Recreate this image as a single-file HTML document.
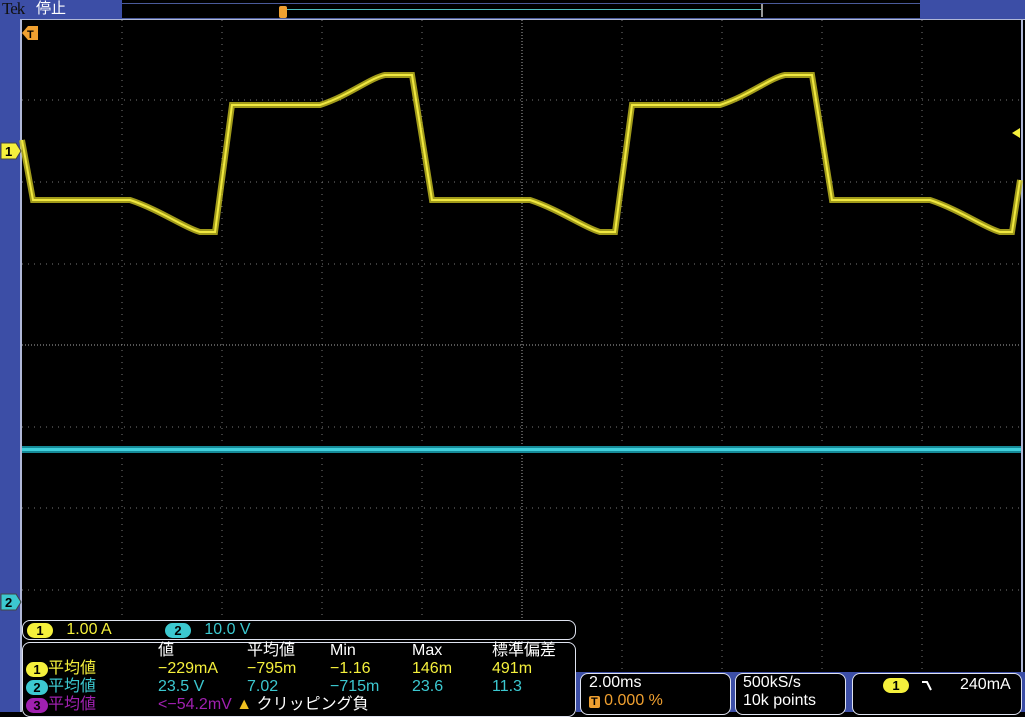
<!DOCTYPE html>
<html><head><meta charset="utf-8"><style>
body{margin:0;width:1025px;height:712px;background:#000;overflow:hidden;position:relative;font-family:"Liberation Sans","Noto Sans CJK JP",sans-serif}
.a{position:absolute}
.box{position:absolute;border:1.5px solid #dfe3f0;border-radius:8px;background:#000;box-sizing:border-box}
.y{color:#f5f03c}.c{color:#3cc8d0}.m{color:#a020b0}.w{color:#fff}
.pill{display:inline-block;border-radius:9px;width:26px;height:15px;line-height:15px;text-align:center;color:#000;font-size:13px;font-weight:bold;vertical-align:-1px}
.t{position:absolute;font-size:16px;line-height:18px;white-space:nowrap}
</style></head><body>
<div class="a" style="left:0;top:0;width:20px;height:712px;background:#3c4ea6"></div>
<div class="a" style="left:0;top:0;width:122px;height:19px;background:#3c4ea6"></div>
<div class="a" style="left:920px;top:0;width:105px;height:19px;background:#3c4ea6"></div>
<div class="a" style="left:122px;top:3px;width:798px;height:14px;border-top:1px solid #4a5a9a;border-bottom:1px solid #4a5a9a"></div>
<div class="a" style="left:286px;top:9px;width:476px;height:1px;background:#4cc0c0"></div>
<div class="a" style="left:761px;top:4px;width:2px;height:13px;background:#999"></div>
<div class="a" style="left:279px;top:6px;width:8px;height:12px;background:#f0a030;border-radius:2px"></div>
<div class="a" style="left:2px;top:-1px;font-size:17px;color:#111;font-family:'Liberation Serif',serif;letter-spacing:-1px">Tek</div>
<div class="a" style="left:36px;top:0;font-size:15px;line-height:18px;color:#fff">停止</div>
<div class="a" style="left:20px;top:19px;width:1005px;height:1px;background:#b0b8d8"></div>
<div class="a" style="left:1021px;top:19px;width:2px;height:653px;background:#b0b8d8"></div>
<div class="a" style="left:20px;top:19px;width:2px;height:693px;background:#b0b8d8"></div>
<svg class="a" style="left:0;top:0" width="1025" height="712">
<g stroke="#777" stroke-width="1" stroke-dasharray="1 5">
<line x1="122" y1="20" x2="122" y2="672"/><line x1="222" y1="20" x2="222" y2="672"/><line x1="322" y1="20" x2="322" y2="672"/><line x1="422" y1="20" x2="422" y2="672"/><line x1="622" y1="20" x2="622" y2="672"/><line x1="722" y1="20" x2="722" y2="672"/><line x1="822" y1="20" x2="822" y2="672"/><line x1="922" y1="20" x2="922" y2="672"/>
<line x1="22" y1="100" x2="1020" y2="100"/><line x1="22" y1="182" x2="1020" y2="182"/><line x1="22" y1="264" x2="1020" y2="264"/><line x1="22" y1="427" x2="1020" y2="427"/><line x1="22" y1="508" x2="1020" y2="508"/><line x1="22" y1="590" x2="1020" y2="590"/>
</g>
<g stroke="#aaa" stroke-width="1" stroke-dasharray="1 2">
<line x1="522" y1="20" x2="522" y2="672"/><line x1="22" y1="345" x2="1020" y2="345"/>
</g>
<path d="M22 140 L33 200 L130 200 C160 210 185 228 200 232 L215 232 L232 105 L320 105 C350 95 370 78 385 75 L412 75 L432 200 L530 200 C560 210 585 228 600 232 L615 232 L632 105 L720 105 C750 95 770 78 785 75 L812 75 L832 200 L930 200 C960 210 985 228 1000 232 L1012 232 L1020 180" fill="none" stroke="#c8c020" stroke-width="6" opacity="0.8"/>
<path d="M22 140 L33 200 L130 200 C160 210 185 228 200 232 L215 232 L232 105 L320 105 C350 95 370 78 385 75 L412 75 L432 200 L530 200 C560 210 585 228 600 232 L615 232 L632 105 L720 105 C750 95 770 78 785 75 L812 75 L832 200 L930 200 C960 210 985 228 1000 232 L1012 232 L1020 180" fill="none" stroke="#f0e840" stroke-width="2"/>
<rect x="22" y="446" width="999" height="7" fill="#168a98"/>
<rect x="22" y="448" width="999" height="3" fill="#40d0dc"/>
<path d="M1 143 h15 l5 8 l-5 8 h-15z" fill="#f5f03c" stroke="#444"/>
<text x="5" y="156" font-size="13" font-weight="bold" fill="#000" font-family="Liberation Sans">1</text>
<path d="M1 594 h15 l5 8 l-5 8 h-15z" fill="#3cc8d0" stroke="#444"/>
<text x="5" y="607" font-size="13" font-weight="bold" fill="#000" font-family="Liberation Sans">2</text>
<path d="M22 33 l6 -7 h10 v14 h-10z" fill="#f0a030"/>
<text x="27" y="38" font-size="11" font-weight="bold" fill="#000" font-family="Liberation Sans">T</text>
<path d="M1012 133 l8 -5 v10z" fill="#f5f03c"/>
</svg>
<div class="a" style="left:576px;top:672px;width:449px;height:40px;background:#3c4ea6"></div>
<div class="box" style="left:22px;top:620px;width:554px;height:20px"></div>
<div class="t y" style="left:27px;top:621px"><span class="pill" style="background:#f5f03c">1</span>&nbsp;&nbsp; 1.00 A</div>
<div class="t c" style="left:165px;top:621px"><span class="pill" style="background:#3cc8d0">2</span>&nbsp;&nbsp; 10.0 V</div>
<div class="box" style="left:22px;top:642px;width:554px;height:75px"></div>
<div class="t w" style="left:158px;top:642px">値</div>
<div class="t w" style="left:247px;top:642px">平均値</div>
<div class="t w" style="left:330px;top:642px">Min</div>
<div class="t w" style="left:412px;top:642px">Max</div>
<div class="t w" style="left:492px;top:642px">標準偏差</div>
<div class="t y" style="left:26px;top:660px"><span class="pill" style="background:#f5f03c;width:22px">1</span>平均値</div>
<div class="t y" style="left:158px;top:660px">−229mA</div><div class="t y" style="left:247px;top:660px">−795m</div><div class="t y" style="left:330px;top:660px">−1.16</div><div class="t y" style="left:412px;top:660px">146m</div><div class="t y" style="left:492px;top:660px">491m</div>
<div class="t c" style="left:26px;top:678px"><span class="pill" style="background:#3cc8d0;width:22px">2</span>平均値</div>
<div class="t c" style="left:158px;top:678px">23.5 V</div><div class="t c" style="left:247px;top:678px">7.02</div><div class="t c" style="left:330px;top:678px">−715m</div><div class="t c" style="left:412px;top:678px">23.6</div><div class="t c" style="left:492px;top:678px">11.3</div>
<div class="t m" style="left:26px;top:696px"><span class="pill" style="background:#a020b0;width:22px">3</span>平均値</div>
<div class="t m" style="left:158px;top:696px">&lt;−54.2mV <span style="color:#f0c020">▲</span><span class="w"> クリッピング負</span></div>
<div class="box" style="left:580px;top:673px;width:151px;height:42px"></div>
<div class="t w" style="left:589px;top:674px">2.00ms</div>
<div class="t" style="left:589px;top:692px;color:#f0a030"><span style="background:#f0a030;color:#000;font-size:11px;font-weight:bold;padding:0 2px;border-radius:2px">T</span> 0.000 %</div>
<div class="box" style="left:735px;top:673px;width:111px;height:42px"></div>
<div class="t w" style="left:743px;top:674px">500kS/s</div>
<div class="t w" style="left:743px;top:692px">10k points</div>
<div class="box" style="left:852px;top:673px;width:170px;height:42px"></div>
<div class="t w" style="left:883px;top:676px"><span class="pill" style="background:#f5f03c">1</span></div>
<svg class="a" style="left:920px;top:678px" width="14" height="14"><path d="M2 4 H7 L11 12" fill="none" stroke="#fff" stroke-width="2"/></svg>
<div class="t w" style="left:960px;top:676px">240mA</div>
</body></html>
